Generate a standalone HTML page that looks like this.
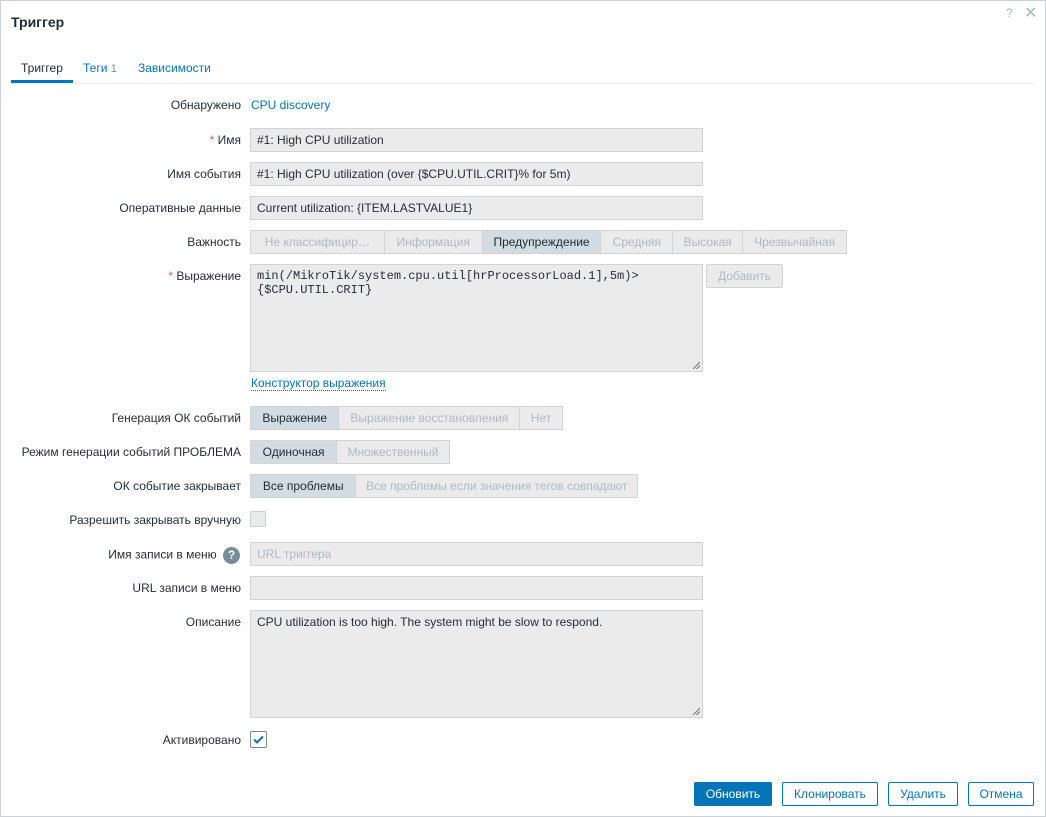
<!DOCTYPE html>
<html><head><meta charset="utf-8"><style>
*{box-sizing:border-box;margin:0;padding:0}
body{width:1046px;height:817px;background:#fff;font-family:"Liberation Sans",Arial,sans-serif;font-size:12px;color:#1f2c33;position:relative;overflow:hidden}
.frame{position:absolute;left:0;top:0;width:1046px;height:817px;border:1px solid #c9d3d8}
.a{position:absolute}
.lbl{position:absolute;right:805px;text-align:right;white-space:nowrap}
.inp{position:absolute;left:250px;width:453px;height:24px;background:#ebebeb;border:1px solid #d3d3d3;padding:0 6px;line-height:22px;white-space:nowrap}
.seg{position:absolute;height:24px;display:flex;border:1px solid #d3d3d3;background:#ebebeb}
.seg div{line-height:22px;text-align:center;color:#acbbc2;border-left:1px solid #d3d3d3}
.seg div:first-child{border-left:none}
.seg .on{background:#d2dce2;color:#1f2c33}
.req{color:#e45959}
.btn{position:absolute;top:782px;height:24px;border:1px solid #0275b8;color:#0275b8;background:#fff;border-radius:2px;text-align:center;line-height:22px}
.cb{position:absolute;left:250px;width:16px;height:16px;border:1px solid #c9cfd2;border-radius:2px;background:#ebebeb}
.grip{position:absolute;right:2px;bottom:2px;width:7px;height:7px;background:linear-gradient(135deg,transparent 45%,#777 46%,#777 54%,transparent 55%,transparent 70%,#777 71%,#777 79%,transparent 80%)}
</style></head><body>
<div class="frame"></div>
<div class="a" style="left:11px;top:14px;font-size:14px;font-weight:bold;color:#1f2c33">Триггер</div>
<div class="a" style="left:1006px;top:6px;color:#a9b7be;font-size:12px">?</div>
<div class="a" style="left:1024px;top:3px;color:#a9b7be;font-size:16px">✕</div>
<div class="a" style="left:11px;top:83px;width:1024px;height:1px;background:#ebeef0"></div>
<div class="a" style="left:11px;top:80px;width:62px;height:3px;background:#0275b8"></div>
<div class="a" style="left:21px;top:61px">Триггер</div>
<div class="a" style="left:83px;top:61px;color:#0275b8">Теги <span style="color:#768d99;font-size:11px">1</span></div>
<div class="a" style="left:138px;top:61px;color:#0275b8">Зависимости</div>

<div class="lbl" style="top:98px">Обнаружено</div>
<div class="a" style="left:251px;top:98px;color:#0275b8">CPU discovery</div>
<div class="lbl" style="top:133px"><span class="req">*</span> Имя</div>
<div class="inp" style="top:128px">#1: High CPU utilization</div>
<div class="lbl" style="top:167px">Имя события</div>
<div class="inp" style="top:162px">#1: High CPU utilization (over {$CPU.UTIL.CRIT}% for 5m)</div>
<div class="lbl" style="top:201px">Оперативные данные</div>
<div class="inp" style="top:196px">Current utilization: {ITEM.LASTVALUE1}</div>
<div class="lbl" style="top:235px">Важность</div>
<div class="seg" style="left:250px;top:230px;width:597px">
<div style="width:133px">Не классифицир…</div><div style="width:98px">Информация</div><div class="on" style="width:119px">Предупреждение</div><div style="width:72px">Средняя</div><div style="width:70px">Высокая</div><div style="width:104px">Чрезвычайная</div></div>
<div class="lbl" style="top:269px"><span class="req">*</span> Выражение</div>
<div class="inp" style="top:264px;height:108px;font-family:'Liberation Mono',monospace;font-size:12px;line-height:14px;padding-top:4px;white-space:pre">min(/MikroTik/system.cpu.util[hrProcessorLoad.1],5m)&gt;
{$CPU.UTIL.CRIT}<div class="grip"></div></div>
<div class="a" style="left:706px;top:264px;width:77px;height:24px;border:1px solid #d3d3d3;background:#ebebeb;color:#acbbc2;text-align:center;line-height:22px;border-radius:2px">Добавить</div>
<div class="a" style="left:251px;top:376px;color:#0275b8;border-bottom:1px dotted #0275b8;line-height:14px">Конструктор выражения</div>
<div class="lbl" style="top:411px">Генерация ОК событий</div>
<div class="seg" style="left:250px;top:406px;width:313px"><div class="on" style="width:88px">Выражение</div><div style="width:182px">Выражение восстановления</div><div style="width:43px">Нет</div></div>
<div class="lbl" style="top:445px">Режим генерации событий ПРОБЛЕМА</div>
<div class="seg" style="left:250px;top:440px;width:200px"><div class="on" style="width:86px">Одиночная</div><div style="width:114px">Множественный</div></div>
<div class="lbl" style="top:479px">ОК событие закрывает</div>
<div class="seg" style="left:250px;top:474px;width:388px"><div class="on" style="width:105px">Все проблемы</div><div style="width:283px">Все проблемы если значения тегов совпадают</div></div>
<div class="lbl" style="top:513px">Разрешить закрывать вручную</div>
<div class="cb" style="top:511px"></div>
<div class="lbl" style="top:547px;right:806px">Имя записи в меню <span style="display:inline-block;width:17px;height:17px;border-radius:50%;background:#768d99;color:#fff;font-weight:bold;text-align:center;line-height:17px;vertical-align:middle;margin-left:3px">?</span></div>
<div class="inp" style="top:542px;color:#acbbc2">URL триггера</div>
<div class="lbl" style="top:581px">URL записи в меню</div>
<div class="inp" style="top:576px"></div>
<div class="lbl" style="top:615px">Описание</div>
<div class="inp" style="top:610px;height:108px;line-height:14px;padding-top:4px">CPU utilization is too high. The system might be slow to respond.<div class="grip"></div></div>
<div class="lbl" style="top:733px">Активировано</div>
<div class="cb" style="top:731px;width:17px;height:17px;background:#fff;border-color:#768d99"><svg width="15" height="15" viewBox="0 0 15 15"><path d="M3 7.5 L6 10.5 L12 4.5" fill="none" stroke="#0275b8" stroke-width="2"/></svg></div>

<div class="btn" style="left:694px;width:78px;background:#0275b8;color:#fff">Обновить</div>
<div class="btn" style="left:782px;width:96px">Клонировать</div>
<div class="btn" style="left:888px;width:70px">Удалить</div>
<div class="btn" style="left:968px;width:66px">Отмена</div>
</body></html>
